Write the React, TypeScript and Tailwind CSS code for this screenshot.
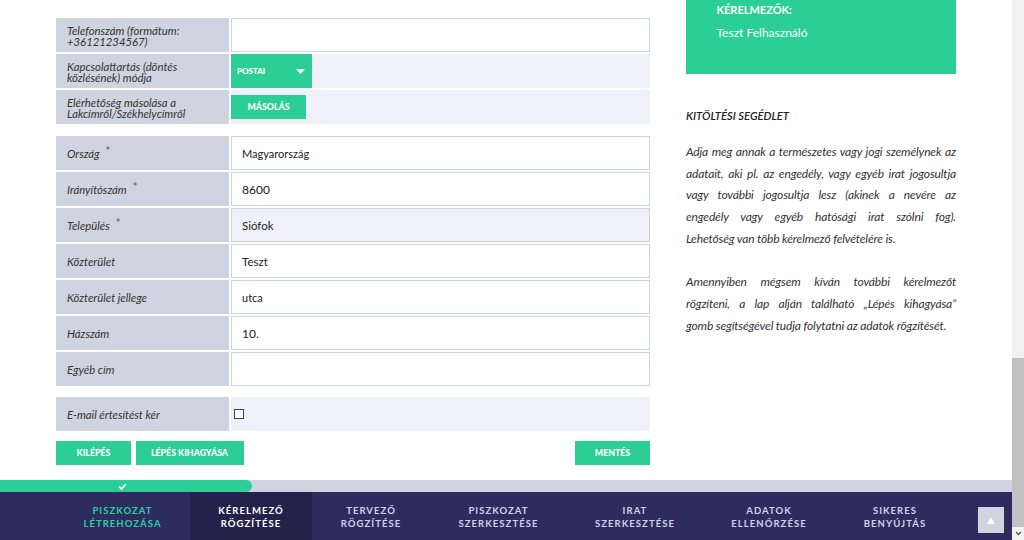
import React from "react";

const font = { fontFamily: '"Lato", "Noto Sans", sans-serif' };

function Label({ children, star }: { children: React.ReactNode; star?: boolean }) {
  return (
    <div className="w-[173px] shrink-0 bg-[#d0d3e0] flex items-center pl-[11px] pr-2 pt-[2px] text-[11.3px] leading-[11.5px] italic text-[#333]">
      <span>{children}</span>
      {star && <span className="ml-[6px] -mt-[6px] not-italic text-[11px] text-[#555]">*</span>}
    </div>
  );
}

function InputRow({ label, value, star, tint, size = "text-[11.5px]" }: { label: string; value?: string; star?: boolean; tint?: boolean; size?: string }) {
  return (
    <div className="flex h-[34px] gap-[2px]">
      <Label star={star}>{label}</Label>
      <div className={`flex-1 border border-[#d0d3e0] flex items-center pl-[10px] pt-[2px] text-[#222] ${size} ${tint ? "bg-[#f0f1f8]" : "bg-white"}`}>
        {value}
      </div>
    </div>
  );
}

function Btn({ children, className = "" }: { children: React.ReactNode; className?: string }) {
  return (
    <div className={`h-[24px] bg-[#2bcf95] text-white text-[8.8px] font-black flex items-center justify-center ${className}`}>
      {children}
    </div>
  );
}

function Help({ lines, className = "" }: { lines: string[]; className?: string }) {
  return (
    <div className={`text-[12px] leading-[21.7px] italic text-[#333] tracking-[-0.15px] ${className}`}>
      {lines.map((t, i) => (
        <div key={t} className={i < lines.length - 1 ? "[text-align:justify] [text-align-last:justify]" : ""}>{t}</div>
      ))}
    </div>
  );
}

const steps = [
  { l: ["PISZKOZAT", "LÉTREHOZÁSA"], c: "text-[#2bcfa5]", w: "w-[135px]" },
  { l: ["KÉRELMEZŐ", "RÖGZÍTÉSE"], c: "text-white bg-[#23224a]", w: "w-[122px]" },
  { l: ["TERVEZŐ", "RÖGZÍTÉSE"], c: "text-[#d0d3e8]", w: "w-[118px]" },
  { l: ["PISZKOZAT", "SZERKESZTÉSE"], c: "text-[#d0d3e8]", w: "w-[137px]" },
  { l: ["IRAT", "SZERKESZTÉSE"], c: "text-[#d0d3e8]", w: "w-[136px]" },
  { l: ["ADATOK", "ELLENŐRZÉSE"], c: "text-[#d0d3e8]", w: "w-[132px]" },
  { l: ["SIKERES", "BENYÚJTÁS"], c: "text-[#d0d3e8]", w: "w-[120px]" },
];

export default function App() {
  return (
    <div className="relative flex h-[540px] w-[1024px] overflow-hidden bg-white" style={font}>
      <div className="w-[1012px] flex flex-col">
        <div className="flex-1 flex pl-[56px]">
          <div className="w-[594px] pt-[18px] flex flex-col">
            <div className="flex flex-col gap-[2px]">
              <InputRow label="Telefonszám (formátum: +36121234567)" />
              <div className="flex h-[34px] gap-[2px]">
                <Label>Kapcsolattartás (döntés közlésének) módja</Label>
                <div className="flex-1 bg-[#f0f1f8]">
                  <div className="w-[81px] h-full bg-[#2bcf95] text-white text-[8px] font-black flex items-center justify-between pl-[6px] pr-[7px]">
                    POSTAI
                    <svg width="9" height="5" viewBox="0 0 9 5"><path d="M0 0h9L4.5 5z" fill="#fff" /></svg>
                  </div>
                </div>
              </div>
              <div className="flex h-[34px] gap-[2px]">
                <Label>Elérhetőség másolása a Lakcímről/Székhelycímről</Label>
                <div className="flex-1 bg-[#f0f1f8] pt-[5px]">
                  <Btn className="w-[75px]">MÁSOLÁS</Btn>
                </div>
              </div>
            </div>
            <div className="mt-[12px] flex flex-col gap-[2px]">
              <InputRow label="Ország" value="Magyarország" star size="text-[11px]" />
              <InputRow label="Irányítószám" value="8600" star size="text-[12px]" />
              <InputRow label="Település" value="Siófok" star tint />
              <InputRow label="Közterület" value="Teszt" />
              <InputRow label="Közterület jellege" value="utca" size="text-[11px]" />
              <InputRow label="Házszám" value="10." size="text-[12px]" />
              <InputRow label="Egyéb cím" />
            </div>
            <div className="mt-[11px] flex h-[34px] gap-[2px]">
              <Label>E-mail értesítést kér</Label>
              <div className="flex-1 bg-[#f0f1f8] flex items-center pl-[3px]">
                <div className="w-[10px] h-[10px] border border-[#444] bg-white" />
              </div>
            </div>
            <div className="mt-[10px] flex">
              <Btn className="w-[75px]">KILÉPÉS</Btn>
              <Btn className="w-[108px] ml-[4.5px]">LÉPÉS KIHAGYÁSA</Btn>
              <Btn className="w-[75px] ml-auto">MENTÉS</Btn>
            </div>
          </div>
          <div className="w-[270px] ml-[36px]">
            <div className="h-[74px] bg-[#2bcf95] text-white pl-[30.5px] pt-[2px]">
              <div className="text-[11px] font-bold leading-[15px]">KÉRELMEZŐK:</div>
              <div className="text-[12px] leading-[15px] mt-[8px]">Teszt Felhasználó</div>
            </div>
            <div className="mt-[34px] text-[11.2px] leading-[15px] font-semibold italic text-[#222]">KITÖLTÉSI SEGÉDLET</div>
            <Help
              className="mt-[18px]"
              lines={[
                "Adja meg annak a természetes vagy jogi személynek az",
                "adatait, aki pl. az engedély, vagy egyéb irat jogosultja",
                "vagy további jogosultja lesz (akinek a nevére az",
                "engedély vagy egyéb hatósági irat szólni fog).",
                "Lehetőség van több kérelmező felvételére is.",
              ]}
            />
            <Help
              className="mt-[21.7px]"
              lines={[
                "Amennyiben mégsem kíván további kérelmezőt",
                "rögzíteni, a lap alján található „Lépés kihagyása”",
                "gomb segítségével tudja folytatni az adatok rögzítését.",
              ]}
            />
          </div>
        </div>
        <div className="h-[12px] bg-[#d0d3e0]">
          <div className="w-[252px] h-full bg-[#2bcf95] rounded-r-[6px] flex items-center pl-[118px]">
            <svg width="9" height="7" viewBox="0 0 9 7"><path d="M1 3.5 3.4 6 8 1" fill="none" stroke="#fff" strokeWidth="1.8" /></svg>
          </div>
        </div>
        <div className="h-[48px] bg-[#2e2c5f] flex pl-[55px]">
          {steps.map((s) => (
            <div key={s.l[1] + s.l[0]} className={`${s.w} ${s.c} pt-[2px] flex flex-col items-center justify-center text-[9.5px] leading-[13px] font-bold tracking-[1.05px]`}>
              <span>{s.l[0]}</span>
              <span>{s.l[1]}</span>
            </div>
          ))}
        </div>
      </div>
      <div className="w-[12px] bg-[#f1f1f1] flex flex-col justify-end">
        <div className="h-[169px] bg-[#c1c1c1]" />
        <div className="h-[13px] flex items-center justify-center">
          <svg width="7" height="5" viewBox="0 0 7 5"><path d="M1 1l2.5 2.5L6 1" fill="none" stroke="#505050" strokeWidth="1.3" /></svg>
        </div>
      </div>
      <div className="absolute left-[978px] top-[507px] w-[26px] h-[26px] bg-[#d0d3e0] flex items-center justify-center">
        <svg width="8" height="7" viewBox="0 0 8 7"><path d="M4 0l4 7H0z" fill="#fff" /></svg>
      </div>
    </div>
  );
}
